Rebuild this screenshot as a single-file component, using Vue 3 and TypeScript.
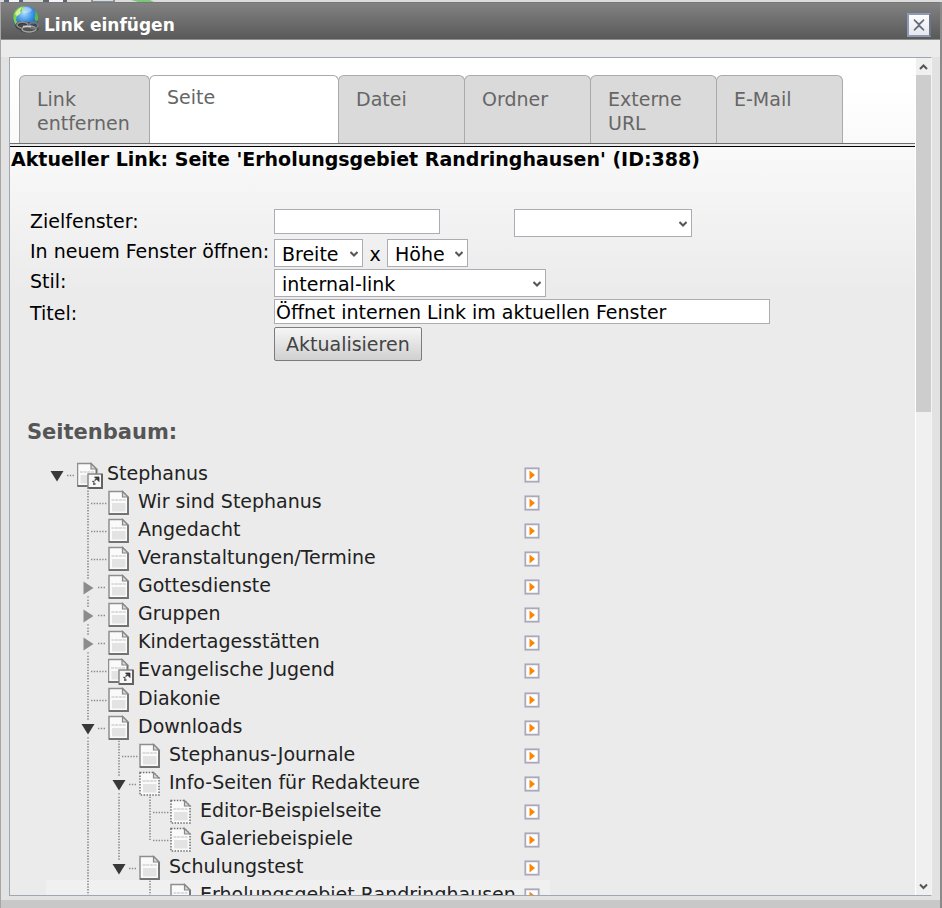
<script setup lang="ts">
import { ref } from 'vue'

type Expander = 'open' | 'closed' | 'none'
type IconKind = 'page' | 'shortcut' | 'hidden'

interface TreeRow {
  title: string
  level: number
  icon: IconKind
  expander: Expander
  rails: number[]
  last?: boolean
  tall?: boolean
  current?: boolean
}

const tabs = ['Link entfernen', 'Seite', 'Datei', 'Ordner', 'Externe URL', 'E-Mail']
const activeTab = ref('Seite')

const target = ref('')
const targetPreset = ref('')
const popupWidth = ref('Breite')
const popupHeight = ref('Höhe')
const linkStyle = ref('internal-link')
const linkTitle = ref('Öffnet internen Link im aktuellen Fenster')

const rows: TreeRow[] = [
  { title: 'Stephanus', level: 0, icon: 'shortcut', expander: 'open', rails: [] },
  { title: 'Wir sind Stephanus', level: 1, icon: 'page', expander: 'none', rails: [] },
  { title: 'Angedacht', level: 1, icon: 'page', expander: 'none', rails: [] },
  { title: 'Veranstaltungen/Termine', level: 1, icon: 'page', expander: 'none', rails: [] },
  { title: 'Gottesdienste', level: 1, icon: 'page', expander: 'closed', rails: [] },
  { title: 'Gruppen', level: 1, icon: 'page', expander: 'closed', rails: [] },
  { title: 'Kindertagesstätten', level: 1, icon: 'page', expander: 'closed', rails: [] },
  { title: 'Evangelische Jugend', level: 1, icon: 'shortcut', expander: 'none', rails: [], tall: true },
  { title: 'Diakonie', level: 1, icon: 'page', expander: 'none', rails: [] },
  { title: 'Downloads', level: 1, icon: 'page', expander: 'open', rails: [] },
  { title: 'Stephanus-Journale', level: 2, icon: 'page', expander: 'none', rails: [1] },
  { title: 'Info-Seiten für Redakteure', level: 2, icon: 'hidden', expander: 'open', rails: [1] },
  { title: 'Editor-Beispielseite', level: 3, icon: 'hidden', expander: 'none', rails: [1, 2] },
  { title: 'Galeriebeispiele', level: 3, icon: 'hidden', expander: 'none', rails: [1, 2], last: true },
  { title: 'Schulungstest', level: 2, icon: 'page', expander: 'open', rails: [1], last: true },
  { title: 'Erholungsgebiet Randringhausen', level: 3, icon: 'page', expander: 'none', rails: [1], current: true },
]

const STEP = 31
const railX = (level: number): number => 11 + STEP * level
const leadWidth = (level: number): number => STEP * (level + 1)
</script>

<template>
  <div class="window">
    <div class="backdrop" aria-hidden="true">
      <svg width="160" height="2" viewBox="0 0 160 2">
        <path d="M4 0h5v2h-5zM19 0h4v2h-4zM43 0h6v2h-6zM63 0h4v2h-4z" fill="#5d6675" />
        <path d="M9 0h10v2h-10zM49 0h14v2h-14z" fill="#f2f4f7" />
        <path d="M91 0h24v2h-24z" fill="#8a909a" />
        <path d="M93 0h20v1h-20z" fill="#d8dbe0" />
        <path d="M131 0h19l4 2h-16z" fill="#7cc67a" />
      </svg>
    </div>

    <section class="dialog" aria-labelledby="dialog-title">
      <header class="titlebar">
        <svg class="globe" width="28" height="28" viewBox="0 0 28 28" aria-hidden="true">
          <defs>
            <radialGradient id="sea" cx="45%" cy="28%" r="75%">
              <stop offset="0" stop-color="#a9dcff" />
              <stop offset="0.45" stop-color="#3d93e6" />
              <stop offset="1" stop-color="#0b3f93" />
            </radialGradient>
          </defs>
          <circle cx="13.5" cy="13.500" r="12.5" fill="url(#sea)" />
          <path d="M1.500 10C3 4 8 1 12 1.500L13 4l-4 2 0 3-4 2-1 4 2 3-2 2C2 18 1 14 1.500 10z" fill="#7fd048" />
          <path d="M3 9c2-4 4-6 7-7L8 6l1 2-4 3z" fill="#e6fbb8" opacity="0.8" />
          <path d="M23 6c3 2 3.500 6 3 9l-2 2-1.500-4 1-4z" fill="#56bd4a" />
          <path d="M10 3c4-2 8-1 10 2-2 3-7 4-10 2z" fill="#fff" opacity="0.35" />
          <path d="M5 17h20l2 8-8 3-10-1z" fill="#3c3c3c" opacity="0.55" />
          <ellipse cx="10.500" cy="20.500" rx="5.500" ry="3" fill="#4a4a4a" stroke="#333" stroke-width="3.200" />
          <ellipse cx="10.500" cy="20" rx="5.500" ry="3" fill="none" stroke="#8b8b8b" stroke-width="1.800" />
          <ellipse cx="17" cy="24" rx="7" ry="3" fill="#555" stroke="#484848" stroke-width="2.600" />
          <ellipse cx="17" cy="24" rx="7" ry="3" fill="none" stroke="#a2a2a2" stroke-width="1.600" />
          <ellipse cx="21.500" cy="20.500" rx="4.500" ry="3" fill="none" stroke="#777" stroke-width="1.800" />
          <path d="M11 21.500h8" stroke="#cfcfcf" stroke-width="1.600" />
        </svg>
        <h1 id="dialog-title">Link einfügen</h1>
        <button class="close" type="button" aria-label="Schließen">
          <svg width="14" height="14" viewBox="0 0 14 14">
            <path d="M2 1.500L7 6L12 1.500M2 12.500L7 8L12 12.500M2 2L12 12M12 2L2 12" fill="none" stroke="#666d7b" stroke-width="1.200" />
          </svg>
        </button>
      </header>

      <div class="frame">
        <div class="panel">
          <main class="content">
            <nav class="tabs">
              <button
                v-for="tab in tabs"
                :key="tab"
                type="button"
                class="tab"
                :class="{ active: tab === activeTab }"
                @click="activeTab = tab"
              >
                {{ tab }}
              </button>
            </nav>

            <h2 class="current-link">Aktueller Link: Seite 'Erholungsgebiet Randringhausen' (ID:388)</h2>

            <form class="form" @submit.prevent>
              <label for="target">Zielfenster:</label>
              <div class="field">
                <input id="target" v-model="target" class="target" type="text" />
                <span class="select preset">
                  <select v-model="targetPreset" aria-label="Zielfenster">
                    <option value=""></option>
                  </select>
                  <svg width="8" height="6" viewBox="0 0 8 6"><path d="M0.500 1L4 4.500L7.500 1" /></svg>
                </span>
              </div>

              <label for="popup-width">In neuem Fenster öffnen:</label>
              <div class="field">
                <span class="select width">
                  <select id="popup-width" v-model="popupWidth">
                    <option>Breite</option>
                  </select>
                  <svg width="8" height="6" viewBox="0 0 8 6"><path d="M0.500 1L4 4.500L7.500 1" /></svg>
                </span>
                <span class="times">x</span>
                <span class="select height">
                  <select v-model="popupHeight" aria-label="Höhe">
                    <option>Höhe</option>
                  </select>
                  <svg width="8" height="6" viewBox="0 0 8 6"><path d="M0.500 1L4 4.500L7.500 1" /></svg>
                </span>
              </div>

              <label for="link-style">Stil:</label>
              <div class="field">
                <span class="select style">
                  <select id="link-style" v-model="linkStyle">
                    <option>internal-link</option>
                  </select>
                  <svg width="8" height="6" viewBox="0 0 8 6"><path d="M0.500 1L4 4.500L7.500 1" /></svg>
                </span>
              </div>

              <label class="low" for="link-title">Titel:</label>
              <div class="field">
                <input id="link-title" v-model="linkTitle" class="title" type="text" />
              </div>

              <div class="field actions">
                <button class="submit" type="submit">Aktualisieren</button>
              </div>
            </form>

            <h3 class="tree-heading">Seitenbaum:</h3>

            <ul class="tree">
              <li
                v-for="row in rows"
                :key="row.title"
                class="row"
                :class="{ tall: row.tall, current: row.current }"
              >
                <svg class="lead" :width="leadWidth(row.level)" height="28" :viewBox="`0 0 ${leadWidth(row.level)} 28`" aria-hidden="true">
                  <g class="dots">
                    <path v-for="rail in row.rails" :key="rail" :d="`M${railX(rail)} 0.700V28`" />
                    <template v-if="row.level > 0">
                      <path v-if="row.expander === 'none'" :d="`M${railX(row.level)} 0.700V${row.last ? 17 : 28}`" />
                      <template v-else>
                        <path :d="`M${railX(row.level)} 0.700V9`" />
                        <path v-if="!row.last" :d="`M${railX(row.level)} 25.200V28`" />
                      </template>
                    </template>
                    <path v-if="row.expander === 'none'" :d="`M${railX(row.level) + 3} 16.500h16`" />
                    <path v-else :d="`M${railX(row.level) + 10} 16.500h8`" />
                  </g>
                  <path v-if="row.expander === 'open'" :d="`M${railX(row.level) - 6.5} 12h13l-6.500 10.500z`" fill="#383838" />
                  <path v-if="row.expander === 'closed'" :d="`M${railX(row.level) - 4.5} 10.500v13l10-6.500z`" fill="#8c8c8c" />
                </svg>

                <svg class="icon" width="30" height="30" viewBox="0 0 30 30" aria-hidden="true">
                  <g :transform="row.icon === 'shortcut' ? 'translate(-0.500 -0.500)' : 'translate(0 -0.500)'">
                    <path
                      d="M1 5h13.500l5.500 5.500V27.500H1z"
                      fill="#fafafa"
                      :stroke="row.icon === 'hidden' ? '#707070' : '#8e8e8e'"
                      stroke-width="1.500"
                      :stroke-dasharray="row.icon === 'hidden' ? '1.500 1.400' : 'none'"
                    />
                    <path v-if="row.icon !== 'hidden'" d="M20 10.500V27.500H1" fill="none" stroke="#727272" stroke-width="1.800" />
                    <path d="M4 16.500h13.500v8.500H4z" fill="#e3e3e3" />
                    <path d="M3.500 13.500h14" stroke="#bdbdbd" stroke-width="1.200" stroke-dasharray="3 0.700" />
                    <path d="M14.500 5v5.500H20z" fill="#d9d9d9" stroke="#888" stroke-width="1.200" />
                  </g>
                  <g v-if="row.icon === 'shortcut'">
                    <path d="M11 15h14v14h-14z" fill="#f7f7f7" stroke="#858585" stroke-width="1.400" />
                    <path d="M25 15v14h-14" fill="none" stroke="#606060" stroke-width="1.900" />
                    <path d="M17.500 18h4.500v4.500z" fill="#333" stroke="#333" stroke-width="0.800" />
                    <path d="M21 19L17.500 21.500M15.500 22l2 1.500M16 25h2.500" stroke="#444" stroke-width="1.500" />
                  </g>
                </svg>

                <a class="name" href="#">{{ row.title }}</a>

                <button class="expand" type="button" :aria-label="`${row.title} Inhalte`">
                  <svg width="16" height="16" viewBox="0 0 16 16">
                    <path d="M0.500 0.500h15v15h-15z" fill="#fff" stroke="#cfcfd8" />
                    <path d="M1.500 1.500h13v13h-13z" fill="#fff" stroke="#a9a9ba" stroke-width="1.400" />
                    <path d="M5.500 3.500L11 8L5.500 12.500z" fill="#ff8500" />
                  </svg>
                </button>
              </li>
            </ul>
          </main>

          <div class="scrollbar" aria-hidden="true">
            <svg width="15" height="17" viewBox="0 0 15 17"><path d="M4 11L7.500 7.500L11 11" /></svg>
            <div class="track"><div class="thumb"></div></div>
            <svg width="15" height="17" viewBox="0 0 15 17"><path d="M4 6.500L7.500 10L11 6.500" /></svg>
          </div>
        </div>
      </div>
      <div class="footer"></div>
    </section>
  </div>
</template>

<style>
body {
  margin: 0;
}
</style>

<style scoped>
.window {
  display: flex;
  flex-direction: column;
  height: 100vh;
  overflow: hidden;
  background: #dcdcdc;
  font-family: 'DejaVu Sans', Verdana, sans-serif;
  font-size: 19px;
  line-height: 24px;
  color: #000;
}

.window * {
  box-sizing: border-box;
}

.backdrop {
  height: 2px;
}

.backdrop svg {
  display: block;
}

.dialog {
  flex: 1;
  min-height: 0;
  display: flex;
  flex-direction: column;
  border-left: 1px solid #a6a6a6;
  border-right: 2px solid #8a8a8a;
  background: #e2e2e2;
}

.titlebar {
  display: flex;
  align-items: flex-start;
  height: 38px;
  padding: 2px 9px 0 11px;
  border-top: 1px solid #777;
  border-bottom: 1px solid #8e8e8e;
  background: linear-gradient(#828282, #595959);
}

.globe {
  margin-right: 4px;
}

.titlebar h1 {
  flex: 1;
  margin: 0;
  padding-top: 8px;
  font-size: 17px;
  color: #fff;
}

.close {
  display: grid;
  place-items: center;
  width: 24px;
  height: 24px;
  margin-top: 8px;
  padding: 0;
  border: 2px solid #8c9ab4;
  border-right-color: #6e7686;
  background: linear-gradient(#fdfdfe, #e6e7ef);
}

.frame {
  flex: 1;
  min-height: 0;
  display: flex;
  padding: 17px 8px 4px 8px;
  background: linear-gradient(#ebebeb 17px, #e2e2e2 17px);
}

.panel {
  flex: 1;
  min-width: 0;
  display: flex;
  border: 1px solid #9fa8b0;
  border-right-color: #f4f4f4;
  background: #fff;
}

.footer {
  height: 8px;
  background: #c8c8c8;
}

.content {
  flex: 1;
  min-width: 0;
  overflow: hidden;
  padding-top: 17px;
  background: linear-gradient(#fff 30px, #ebebeb 235px);
}

.tabs {
  display: flex;
  height: 72px;
  padding-left: 9px;
  border-bottom: 1px solid #000;
  background: linear-gradient(transparent 68px, #6e6e6e 68px, #6e6e6e 69px, #ececec 69px);
}

.tab {
  flex: 0 1 127px;
  height: 68px;
  margin: 0 -1px 0 0;
  padding: 11px 16px 0 17px;
  display: flex;
  align-items: flex-start;
  border: 1px solid #aaa;
  border-bottom: 0;
  border-radius: 6px 6px 0 0;
  background: #dadada;
  font: inherit;
  color: #666;
  text-align: left;
}

.tab:first-child {
  flex-basis: 131px;
}

.tab.active {
  flex-basis: 190px;
  padding-top: 9px;
  background: #fff;
}

.current-link {
  margin: 0;
  padding-left: 1px;
  font-size: 19px;
  line-height: 24px;
}

.form {
  display: grid;
  grid-template-columns: 244px 1fr;
  row-gap: 2px;
  margin: 38px 0 0 20px;
}

.low {
  padding-top: 2px;
}

.field {
  display: flex;
  align-items: flex-start;
}

.actions {
  grid-column: 2;
}

input {
  height: 25px;
  padding: 0 1px;
  border: 1px solid #abadb3;
  background: #fff;
  font: inherit;
  color: #000;
}

.target {
  width: 166px;
}

.title {
  width: 496px;
}

.select {
  position: relative;
  display: flex;
}

.select select {
  appearance: none;
  width: 100%;
  height: 28px;
  padding: 1px 20px 0 7px;
  border: 1px solid #abadb3;
  border-radius: 0;
  background: #fff;
  font: inherit;
  color: #000;
}

.select svg {
  position: absolute;
  right: 5px;
  top: 12px;
  pointer-events: none;
}

.select path,
.scrollbar path {
  fill: none;
  stroke: #555;
  stroke-width: 2;
}

.preset {
  width: 178px;
  margin-left: 74px;
}

.width {
  width: 89px;
}

.height {
  width: 81px;
}

.style {
  width: 272px;
}

.times {
  width: 24px;
  padding-top: 3px;
  text-align: center;
}

.submit {
  height: 34px;
  padding: 0 11px;
  border: 1px solid #7c7c7c;
  border-radius: 2px;
  background: linear-gradient(#f6f6f6, #d0d0d0);
  font: inherit;
  color: #434343;
}

.tree-heading {
  margin: 59px 0 0 17px;
  font-size: 21px;
  line-height: 24px;
  color: #555;
}

.tree {
  width: 504px;
  margin: 15px 0 0 36px;
  padding: 0;
  list-style: none;
}

.row {
  display: flex;
  align-items: flex-start;
  height: 28px;
}

.row.tall {
  height: 29px;
}

.row.current {
  background: #f0f0f0;
}

.lead,
.icon {
  flex: none;
}

.dots path {
  fill: none;
  stroke: #8c8c8c;
  stroke-width: 1.6;
  stroke-dasharray: 1.4 1.4;
}

.name {
  flex: 1;
  line-height: 28px;
  white-space: nowrap;
  color: #222;
  text-decoration: none;
}

.expand {
  width: 16px;
  height: 16px;
  margin: 8px 10px 0 0;
  padding: 0;
  border: 0;
  background: none;
}

.expand svg {
  display: block;
}

.scrollbar {
  display: flex;
  flex-direction: column;
  width: 16px;
  border-left: 1px solid #fff;
  background: #f0f0f0;
}

.track {
  flex: 1;
}

.thumb {
  height: 42%;
  background: #cdcdcd;
}
</style>
